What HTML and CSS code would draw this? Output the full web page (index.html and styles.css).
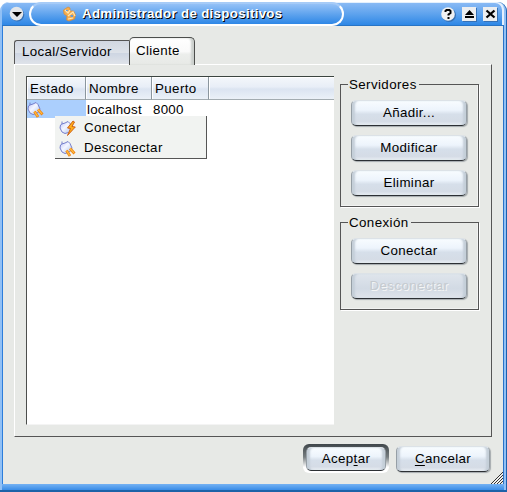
FILE: index.html
```html
<!DOCTYPE html>
<html lang="es">
<head>
<meta charset="utf-8">
<title>Administrador de dispositivos</title>
<link rel="stylesheet" href="styles.css">
</head>
<body>
<svg class="defs" width="0" height="0">
  <defs>
    <linearGradient id="body" x1="0" y1="0" x2="1" y2="1"><stop offset="0" stop-color="#bcc4fa"/><stop offset=".45" stop-color="#f4f6ff"/><stop offset="1" stop-color="#a9c0ee"/></linearGradient>
    <symbol id="plug" viewBox="0 0 17 17">
      <path d="M3 1.500V4L6 3 9 1.500 11 3.500 13 8 12 10.500 9.500 12.500 6 13.500 3 12 1 8 1.500 5 3 4" fill="url(#body)" stroke="#7780cc" stroke-width="1"/>
      <path d="M7.500 10.500 11 16M11 8.500 15.500 13.500" stroke="#ee8310" stroke-width="2.800"/>
      <path d="M7.500 10.500 10.600 15.300M11 8.500 15 12.900" stroke="#ffbd42" stroke-width="1.200"/>
    </symbol>
    <symbol id="bolt" viewBox="0 0 17 17">
      <path d="M3 1.500V4L6 3 9 1.500 11 3.500 13 8 12 10.500 9.500 12.500 6 13.500 3 12 1 8 1.500 5 3 4" fill="url(#body)" stroke="#7780cc"/>
      <path d="M14 1 8.500 8 11.500 8.500 8.500 15.500 16.300 7 13 6.500 15.500 2Z" fill="#ffae18" stroke="#c95710" stroke-width=".9"/>
    </symbol>
  </defs>
</svg>
<div class="window">
  <header class="titlebar">
    <svg class="menu-btn" width="16" height="16" viewBox="0 0 16 16"><circle cx="8.500" cy="8.800" r="6.800" fill="#3671b6"/><circle cx="7.500" cy="7.600" r="6.800" fill="#e3e6e9"/><path d="M3 6h10L8 11Z" fill="#000"/></svg>
    <div class="caption">
      <svg width="15" height="16" viewBox="0 0 15 16"><path d="M1.500 4 6 1 8 2 8 5 11.500 5 13.500 9 12.500 13 7 15 4.500 14 5 10 2 8Z" fill="#f4ad4e" stroke="#d98a36" stroke-width=".7"/><path d="M3 4 6 7 8 4M6 10l5-4 2 4M6 13l5-1" fill="none" stroke="#ffe5b0" stroke-width="1.200"/><path d="M4 4h2v1H4zM8.500 9h2.500v2H8.500z" fill="#6a9ad2"/></svg>
      <span>Administrador de dispositivos</span>
    </div>
    <div class="controls">
      <svg width="16" height="16" viewBox="0 0 16 16"><circle cx="8" cy="9" r="7" fill="#3671b6"/><circle cx="7" cy="8" r="6.800" fill="#f0f1f2"/><path d="M4.500 6V5l1-1h3l1 1v2L7.500 8.500v1M7.500 11v2" fill="none" stroke="#000" stroke-width="2"/></svg>
      <svg width="16" height="16" viewBox="0 0 16 16"><path d="M1 2h14v14H1z" fill="#3671b6"/><path d="M0 1h14v14H0z" fill="#eceef0"/><path d="M3 9 7.500 4 12 9ZM3 10h9v2H3z" fill="#000"/></svg>
      <svg width="16" height="16" viewBox="0 0 16 16"><path d="M1 2h14v14H1z" fill="#3671b6"/><path d="M0 1h14v14H0z" fill="#eceef0"/><path d="M3.500 4.500l8 7M11.500 4.500l-8 7" stroke="#000" stroke-width="2.300"/></svg>
    </div>
  </header>
  <main class="content">
    <nav class="tabs"><div class="tab">Local/Servidor</div><div class="tab active">Cliente</div></nav>
    <section class="panel">
      <div class="list">
        <div class="row head"><span>Estado</span><span>Nombre</span><span>Puerto</span><span></span></div>
        <div class="row"><span class="selected"><svg width="17" height="17"><use href="#plug"/></svg></span><span>localhost</span><span>8000</span></div>
        <div class="menu">
          <div class="item"><svg width="17" height="17"><use href="#bolt"/></svg>Conectar</div>
          <div class="item"><svg width="17" height="17"><use href="#plug"/></svg>Desconectar</div>
        </div>
      </div>
      <aside class="side">
        <div class="group servers"><h2>Servidores</h2><button>Añadir...</button><button>Modificar</button><button>Eliminar</button></div>
        <div class="group connection"><h2>Conexión</h2><button>Conectar</button><button disabled>Desconectar</button></div>
      </aside>
    </section>
    <footer class="actions">
      <div class="default"><button>Acep<u>t</u>ar</button></div>
      <button class="cancel"><u>C</u>ancelar</button>
    </footer>
    <svg class="grip" width="13" height="13" viewBox="0 0 13 13"><path d="M1 13 13 1M4 13 13 4M7 13 13 7M10 13 13 10" stroke="#333" stroke-width="1"/><path d="M2.500 13 13 2.500M5.500 13 13 5.500M8.500 13 13 8.500" stroke="#fff" stroke-width=".7"/></svg>
  </main>
</div>
</body>
</html>
```
FILE: styles.css
```css
* { box-sizing: border-box; }
body {
  margin: 0;
  padding-top: 2px;
  height: 492px;
  overflow: hidden;
  background: #fff;
  font: 13.33px/16px "Liberation Sans", sans-serif;
  letter-spacing: .25px;
  color: #000;
}
svg { display: block; flex: none; }
.defs { position: absolute; }
.window {
  height: 490px;
  display: flex;
  flex-direction: column;
  background: #91c0f5;
  border-right: 1px solid #1c62ae;
  border-bottom: 2px solid #1c62a8;
  border-radius: 9px 9px 0 0;
  padding: 0 2px 0 2px;
  overflow: hidden;
}
.titlebar {
  height: 24px;
  flex: none;
  display: flex;
  align-items: center;
  background: linear-gradient(#8dbcf5, #5ba1ed 55%, #2e87e6);
  border-bottom: 1px solid #2874c5;
  border-radius: 7px 7px 0 0;
  box-shadow: inset -2px 1px 0 #e4f0fd;
  padding: 0 8px 0 7px;
}
.caption {
  display: flex;
  align-items: center;
  gap: 5px;
  width: 315px;
  height: 24px;
  margin-left: 4px;
  padding-left: 31px;
  border: 2px solid #fff;
  border-top-color: #a6cbf7;
  border-radius: 16px;
  background: linear-gradient(#94c1f7, #5ba1ed 55%, #2e87e6);
  color: #fff;
  font-weight: bold;
  letter-spacing: .3px;
  text-shadow: 1px 1px 0 #000;
  white-space: nowrap;
}
.controls { display: flex; gap: 5px; margin-left: auto; margin-right: -3px; }
.content {
  position: relative;
  height: 458px;
  background: #e7e9e6;
  border-left: 1px solid #2c7ddb;
  border-right: 1px solid #2c72c8;
  padding: 11px 11px 0;
}
.window::after { content: ""; height: 6px; background: linear-gradient(#75b2f3, #398ce7); }
.tabs { display: flex; align-items: flex-end; height: 27px; }
.tab {
  height: 24px;
  width: 115px;
  padding: 3px 0 0 7px;
  border: 1px solid #555;
  border-right: 0;
  border-bottom: 0;
  border-radius: 3px 0 0 0;
  background: linear-gradient(#d1d7e1, #dde2e9 50%, #cdd5e2 52%, #dfe3e9);
  letter-spacing: .33px;
}
.tab.active {
  height: 28px;
  width: 66px;
  margin-bottom: -1px;
  padding: 5px 0 0 6px;
  border: 1px solid #4c4e4c;
  border-bottom: 0;
  border-radius: 5px 5px 0 0;
  background: linear-gradient(#fff, #fafafa 50%, #eceeec 60%, #e7e9e6);
  box-shadow: inset -3px 0 2px #ccd0cd;
}
.panel {
  height: 373px;
  border: 1px solid #fff;
  border-right-color: #555;
  border-bottom-color: #555;
  padding: 11px;
  display: flex;
  gap: 6px;
}
.list {
  position: relative;
  width: 308px;
  height: 349px;
  background: #fff;
  border-left: 1px solid #4c4e4c;
  border-top: 1px solid #3c4540;
  border-bottom: 1px solid #f4f4f4;
}
.row { display: grid; grid-template-columns: 59px 66px 57px 1fr; height: 18px; }
.row > span { padding: 2px 0 0 1px; white-space: nowrap; }
.head { height: 23px; }
.head > span {
  padding: 4px 0 0 3px;
  background: linear-gradient(#f4f7fb, #e8eef7 45%, #dbe4f1 55%, #ebf1f8);
  border-right: 1px solid #8b969e;
  border-bottom: 1px solid #a3acb1;
  box-shadow: inset 1px 1px 0 #fff;
  letter-spacing: .4px;
}
.head > span:last-child { border-right: 0; }
.row > .selected { background: #abcffd; padding: 1px 0 0; }
.menu {
  position: absolute;
  left: 28px;
  top: 39px;
  width: 152px;
  height: 43px;
  padding: 2px 0 0 4px;
  background: #f1f3f1;
  border-right: 1px solid #555;
  border-bottom: 1px solid #555;
}
.item { display: flex; align-items: center; gap: 8px; height: 20px; letter-spacing: .35px; }
.side { width: 139px; padding-top: 8px; }
.group {
  border: 1px solid #555;
  box-shadow: inset -1px -1px 0 #f2f3f2, 1px 1px 0 #fff;
  padding: 0 11px 0 10px;
  display: flex;
  flex-direction: column;
  gap: 9px;
}
.servers { height: 123px; }
.connection { height: 88px; margin-top: 15px; }
h2 {
  align-self: flex-start;
  margin: -8px 0 -2px -3px;
  padding: 0 2px 0 1px;
  background: #e7e9e6;
  font: inherit;
  letter-spacing: .4px;
}
button {
  flex: none;
  width: 117px;
  height: 26px;
  margin: 0;
  padding: 0 0 1px;
  font: inherit;
  letter-spacing: .36px;
  color: #000;
  border: 1px solid #dce2e7;
  border-left-color: #969fa6;
  border-right-color: #969fa6;
  border-bottom: 1px solid #2c3034;
  border-radius: 5px;
  background: linear-gradient(#f8fcff, #edf4fc 38%, #d6dfea 55%, #d5dce6 85%, #e8edf3);
  box-shadow: inset 4px 0 2px -1px #c5cfd9, inset -4px 0 2px -1px #c5cfd9, 1px 1px 1px #a5aaad;
}
.group button { width: 116px; }
button:disabled { color: #c5cacf; text-shadow: 1px 1px 0 #f4f5f5; background: linear-gradient(#dfe5ec, #d2dae4 60%, #dfe4eb); }
.actions { display: flex; gap: 7px; justify-content: flex-end; margin-top: 7px; padding-right: 1px; }
.default {
  width: 86px;
  height: 29px;
  padding: 3px 3px 0;
  border-radius: 6px;
  background: linear-gradient(#3f464a, #777e81 45%, #fff 80%);
}
.default button { width: 80px; height: 24px; box-shadow: inset 4px 0 2px -1px #c5cfd9, inset -4px 0 2px -1px #c5cfd9; }
.actions button { padding: 0; }
.cancel { width: 94px; margin: 2px 1px 0 0; }
u { text-underline-offset: 2px; }
.grip { position: absolute; right: 0; bottom: 0; }
```
